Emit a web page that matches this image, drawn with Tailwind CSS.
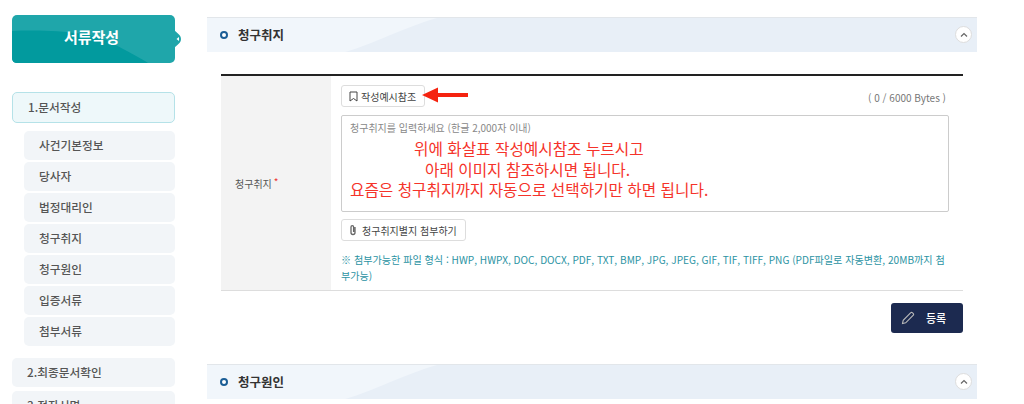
<!DOCTYPE html>
<html lang="ko"><head><meta charset="utf-8">
<script src="https://cdn.jsdelivr.net/npm/@tailwindcss/browser@4"></script>
</head>
<body class="bg-white overflow-hidden">
<div class="w-[1024px] h-[404px] overflow-hidden flex font-['Noto_Sans_CJK_KR','Noto_Sans',sans-serif] text-[#444]">
  <aside class="w-[207px] shrink-0 pl-3 pt-[15px]">
    <div class="relative w-[163px] h-12 rounded-[5px] bg-[#1fa6aa] overflow-visible flex items-center justify-center pr-1 pb-[3px] text-white font-bold text-[15px]">
      <svg class="absolute inset-0" width="163" height="48" viewBox="0 0 163 48"><path d="M0 16C40 14 85 18 100 28C115 36 130 44 136 48H5Q0 48 0 43Z" fill="#029a9e"/></svg>
      <span class="relative">서류작성</span>
      <svg class="absolute left-[161px] top-[12px]" width="10" height="24" viewBox="0 0 10 24"><path d="M0 0C1 6 8 6 8 12C8 18 1 18 0 24Z" fill="#1fa6aa"/><path d="M6 10L3.5 12L6 14Z" fill="#fff"/></svg>
    </div>
    <nav class="mt-[29px] w-[163px] flex flex-col text-[11.7px] font-medium text-[#555]">
      <div class="h-[31px] flex items-center pl-[15px] pb-[2px] rounded-[5px] border border-[#b5e2e8] bg-[#eef8fa]">1.문서작성</div>
      <div class="mt-2 ml-3 flex flex-col gap-[2px]">
        <div class="h-[29px] flex items-center pl-[15px] pb-[2px] rounded-[5px] bg-[#f2f5f8]">사건기본정보</div>
        <div class="h-[29px] flex items-center pl-[15px] pb-[2px] rounded-[5px] bg-[#f2f5f8]">당사자</div>
        <div class="h-[29px] flex items-center pl-[15px] pb-[2px] rounded-[5px] bg-[#f2f5f8]">법정대리인</div>
        <div class="h-[29px] flex items-center pl-[15px] pb-[2px] rounded-[5px] bg-[#f2f5f8]">청구취지</div>
        <div class="h-[29px] flex items-center pl-[15px] pb-[2px] rounded-[5px] bg-[#f2f5f8]">청구원인</div>
        <div class="h-[29px] flex items-center pl-[15px] pb-[2px] rounded-[5px] bg-[#f2f5f8]">입증서류</div>
        <div class="h-[29px] flex items-center pl-[15px] pb-[2px] rounded-[5px] bg-[#f2f5f8]">첨부서류</div>
      </div>
      <div class="mt-3 h-[29px] flex items-center pl-[15px] pb-[2px] rounded-[5px] bg-[#f2f5f8]">2.최종문서확인</div>
      <div class="mt-1 h-[29px] flex items-center pl-[15px] pb-[2px] rounded-[5px] bg-[#f2f5f8]">3.전자서명</div>
    </nav>
  </aside>
  <main class="w-[770px] shrink-0 pt-[17px]">
    <section class="relative h-[35px] border-t border-[#e2e6ea] bg-[#e8eff7] overflow-hidden flex items-center pl-[13px]">
      <svg class="absolute inset-0" width="770" height="35"><path d="M0 0H230C200 8 170 25 135 35H0Z" fill="#f1f6fb"/></svg>
      <span class="relative w-2 h-2 rounded-full border-2 border-[#1b5e96] bg-white"></span>
      <h2 class="relative ml-[10px] text-[12.5px] font-bold text-[#333]">청구취지</h2>
      <span class="absolute right-[5px] top-[8px] w-[17px] h-[17px] rounded-full bg-white border border-[#ddd] flex items-center justify-center"><svg width="8" height="6" viewBox="0 0 8 6"><path d="M1 4.5L4 1.5L7 4.5" fill="none" stroke="#666" stroke-width="1.2"/></svg></span>
    </section>
    <div class="ml-[14px] mt-[22px] w-[742px] border-t-2 border-[#222] border-b border-b-[#ddd] flex h-[217px]">
      <div class="w-[110px] shrink-0 bg-[#f3f3f3] flex items-center pl-[14px] text-[10px] text-[#555]">청구취지 <span class="text-[#e33] ml-[2px] -mt-1">*</span></div>
      <div class="relative flex-1 pl-[10px] pr-[14px] pt-[9px]">
        <div class="flex justify-between items-start">
          <div class="h-[22px] w-[84px] border border-[#ddd] rounded-[3px] flex items-center pl-[7px] text-[10px] text-[#444]">
            <svg width="9" height="11" viewBox="0 0 9 11" class="mr-[3px]"><path d="M1 1H8V10L4.5 7.5L1 10Z" fill="none" stroke="#444" stroke-width="1"/></svg>작성예시참조
          </div>
          <span class="text-[10px] text-[#777] mt-[5px] mr-[3px]">( 0 / 6000 Bytes )</span>
        </div>
        <div class="mt-[8px] h-[97px] border border-[#ccc] rounded-[2px] px-[8px] pt-[4px] text-[10px] text-[#888]">청구취지를 입력하세요 (한글 2,000자 이내)</div>
        <div class="mt-[7px] h-[22px] w-[125px] border border-[#ddd] rounded-[3px] flex items-center pl-[6px] text-[10px] text-[#444]">
          <svg width="10" height="12" viewBox="0 0 10 12" class="mr-[4px]"><path d="M7 3V8.5A2 2 0 0 1 3 8.5V3A1.3 1.3 0 0 1 5.6 3V8" fill="none" stroke="#666" stroke-width="1.3"/></svg>청구취지별지 첨부하기
        </div>
        <p class="mt-[11px] text-[10.1px] leading-[16px] text-[#2b93a3]">※ 첨부가능한 파일 형식 : HWP, HWPX, DOC, DOCX, PDF, TXT, BMP, JPG, JPEG, GIF, TIF, TIFF, PNG (PDF파일로 자동변환, 20MB까지 첨부가능)</p>
        <svg class="absolute left-[91px] top-[10px]" width="47" height="18" viewBox="0 0 47 18"><path d="M0 9L16 1.5V7H46V11H16V16.5Z" fill="#f5230f"/></svg>
        <div class="absolute left-[19px] top-[63px] w-[362px] text-[15.7px] leading-[20.5px] text-[#f5332a]">
          <p class="pl-[64px]">위에 화살표 작성예시참조 누르시고</p>
          <p class="pl-[75px]">아래 이미지 참조하시면 됩니다.</p>
          <p>요즘은 청구취지까지 자동으로 선택하기만 하면 됩니다.</p>
        </div>
      </div>
    </div>
    <div class="ml-[684px] mt-[12px] w-[72px] h-[30px] rounded-[3px] bg-[#1c2a50] flex items-center pl-[10px] text-white text-[11px] font-medium">
      <svg width="14" height="14" viewBox="0 0 14 14" class="mr-[11px]"><path d="M1.5 12.5L2.2 9.3L9.8 1.7A1 1 0 0 1 11.3 1.7L12.3 2.7A1 1 0 0 1 12.3 4.2L4.7 11.8Z" fill="none" stroke="#bbb" stroke-width="1.1"/></svg>등록
    </div>
    <section class="relative mt-[31px] h-[35px] border-t border-[#e2e6ea] bg-[#e8eff7] overflow-hidden flex items-center pl-[13px]">
      <svg class="absolute inset-0" width="770" height="35"><path d="M0 0H230C200 8 170 25 135 35H0Z" fill="#f1f6fb"/></svg>
      <span class="relative w-2 h-2 rounded-full border-2 border-[#1b5e96] bg-white"></span>
      <h2 class="relative ml-[10px] text-[12.5px] font-bold text-[#333]">청구원인</h2>
      <span class="absolute right-[5px] top-[8px] w-[17px] h-[17px] rounded-full bg-white border border-[#ddd] flex items-center justify-center"><svg width="8" height="6" viewBox="0 0 8 6"><path d="M1 4.5L4 1.5L7 4.5" fill="none" stroke="#666" stroke-width="1.2"/></svg></span>
    </section>
  </main>
</div>
</body></html>
